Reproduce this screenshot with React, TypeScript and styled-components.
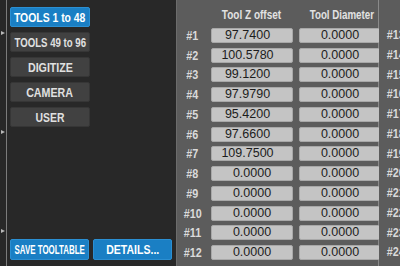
import React from "react";
import styled, { createGlobalStyle } from "styled-components";

const Global = createGlobalStyle`
  html, body { margin: 0; padding: 0; background: #282828; }
  body { font-family: "Liberation Sans", Arial, sans-serif; }
`;

const Screen = styled.div`
  width: 400px;
  height: 266px;
  display: flex;
  overflow: hidden;
  background: #282828;
`;

const LeftStrip = styled.div`
  width: 7px;
  flex: none;
  border-right: 1px solid #7c7c7c;
  display: flex;
  flex-direction: column;
  gap: 95px;
  padding-top: 31px;
  box-sizing: border-box;
`;

const Arrow = styled.div`
  width: 0;
  height: 0;
  margin-left: 1px;
  border-top: 2.5px solid transparent;
  border-bottom: 2.5px solid transparent;
  border-left: 4px solid #b8b8b8;
`;

const Sidebar = styled.div`
  width: 169px;
  flex: none;
  display: flex;
  flex-direction: column;
  justify-content: space-between;
  padding: 7px 0 6px 3px;
  box-sizing: border-box;
`;

const ButtonStack = styled.div`
  display: flex;
  flex-direction: column;
  gap: 5px;
`;

const ButtonRow = styled.div`
  display: flex;
  gap: 4px;
`;

const Button = styled.div<{ $active?: boolean; $w: number; $h: number }>`
  width: ${(p) => p.$w}px;
  height: ${(p) => p.$h}px;
  box-sizing: border-box;
  display: flex;
  align-items: center;
  justify-content: center;
  border-radius: 2px;
  background: ${(p) => (p.$active ? "#1a7fc4" : "#414141")};
  border: 1px solid ${(p) => (p.$active ? "#2b8fd2" : "#363636")};
  color: ${(p) => (p.$active ? "#ffffff" : "#e0e0e0")};
  font-size: 13px;
  font-weight: bold;
  white-space: nowrap;
`;

const Squeeze = styled.span<{ $sx: number }>`
  display: inline-block;
  transform: scaleX(${(p) => p.$sx});
  transform-origin: center;
`;

const TablePanel = styled.div`
  width: 203px;
  flex: none;
  background: #5c5c5c;
  border-left: 1px solid #6c6c6c;
  border-right: 1px solid #8a8a8a;
  box-sizing: border-box;
  padding: 5px 0 0 3px;
  display: flex;
  flex-direction: column;
  gap: 4.75px;
`;

const Row = styled.div`
  display: grid;
  grid-template-columns: 25px 82px 82px;
  column-gap: 6px;
  align-items: center;
`;

const HeaderRow = styled(Row)`
  height: 18px;
`;

const HeaderCell = styled.div`
  text-align: center;
  color: #e2e2e2;
  font-size: 13px;
  font-weight: bold;
  white-space: nowrap;
`;

const Label = styled.div`
  text-align: center;
  color: #dadada;
  font-size: 13px;
  font-weight: bold;
  white-space: nowrap;
`;

const Field = styled.div<{ $shift?: number }>`
  height: 15px;
  box-sizing: border-box;
  background: #c4c4c4;
  border: 1px solid #a8a8a8;
  border-radius: 2px;
  color: #1c1c1c;
  font-size: 12.5px;
  line-height: 13px;
  text-align: center;
  padding-right: ${(p) => p.$shift ?? 0}px;
`;

const RightPanel = styled.div`
  flex: 1;
  background: #5c5c5c;
  padding: 27px 0 0 4px;
  display: flex;
  flex-direction: column;
  gap: 4.75px;
`;

const RightLabel = styled(Label)`
  width: 25px;
  height: 15px;
  line-height: 15px;
`;

const zValues = [
  "97.7400",
  "100.5780",
  "99.1200",
  "97.9790",
  "95.4200",
  "97.6600",
  "109.7500",
  "0.0000",
  "0.0000",
  "0.0000",
  "0.0000",
  "0.0000",
];

export default function App() {
  return (
    <>
      <Global />
      <Screen>
        <LeftStrip>
          <Arrow />
          <Arrow />
          <Arrow />
        </LeftStrip>
        <Sidebar>
          <ButtonStack>
            <Button $active $w={80} $h={20}>
              <Squeeze $sx={0.8}>TOOLS 1 to 48</Squeeze>
            </Button>
            <Button $w={80} $h={20}>
              <Squeeze $sx={0.74}>TOOLS 49 to 96</Squeeze>
            </Button>
            <Button $w={80} $h={20}>
              <Squeeze $sx={0.82}>DIGITIZE</Squeeze>
            </Button>
            <Button $w={80} $h={20}>
              <Squeeze $sx={0.82}>CAMERA</Squeeze>
            </Button>
            <Button $w={80} $h={20}>
              <Squeeze $sx={0.8}>USER</Squeeze>
            </Button>
          </ButtonStack>
          <ButtonRow>
            <Button $active $w={79} $h={21}>
              <Squeeze $sx={0.61}>SAVE TOOLTABLE</Squeeze>
            </Button>
            <Button $active $w={79} $h={21}>
              <Squeeze $sx={0.81}>DETAILS...</Squeeze>
            </Button>
          </ButtonRow>
        </Sidebar>
        <TablePanel>
          <HeaderRow>
            <span />
            <HeaderCell>
              <Squeeze $sx={0.77}>Tool Z offset</Squeeze>
            </HeaderCell>
            <HeaderCell>
              <Squeeze $sx={0.75}>Tool Diameter</Squeeze>
            </HeaderCell>
          </HeaderRow>
          {zValues.map((v, i) => (
            <Row key={i}>
              <Label>
                <Squeeze $sx={0.83}>#{i + 1}</Squeeze>
              </Label>
              <Field $shift={v === "0.0000" ? 0 : 9}>{v}</Field>
              <Field>0.0000</Field>
            </Row>
          ))}
        </TablePanel>
        <RightPanel>
          {zValues.map((_, i) => (
            <RightLabel key={i}>
              <Squeeze $sx={0.83}>#{i + 13}</Squeeze>
            </RightLabel>
          ))}
        </RightPanel>
      </Screen>
    </>
  );
}
